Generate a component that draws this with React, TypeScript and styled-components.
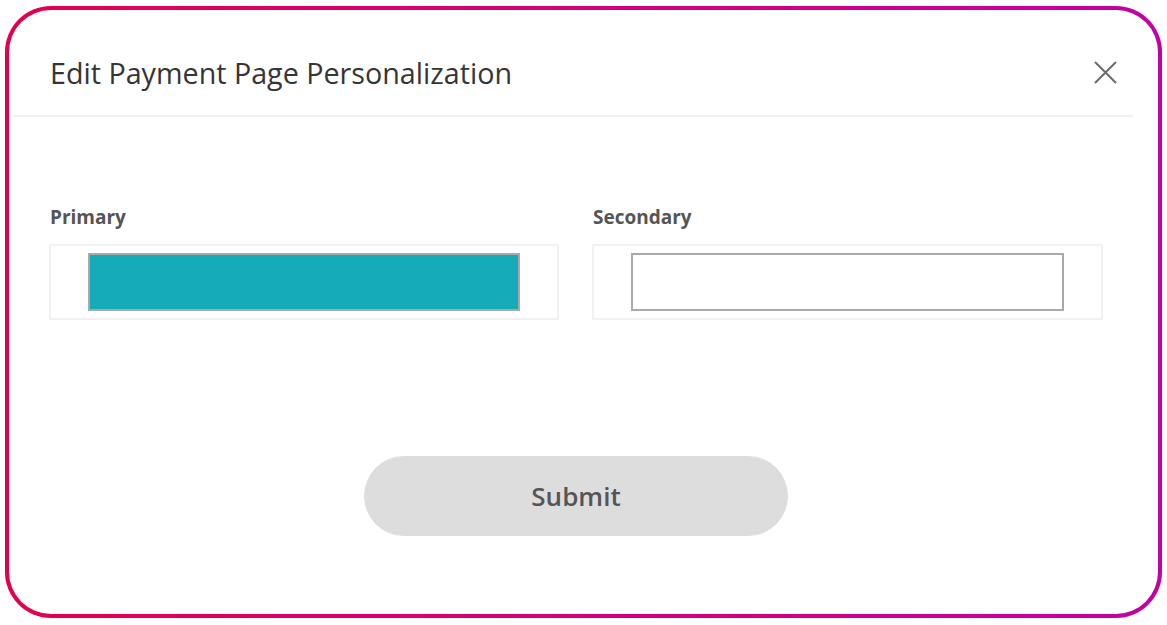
import React from 'react';
import styled, { createGlobalStyle } from 'styled-components';

const GlobalStyle = createGlobalStyle`
  * {
    box-sizing: border-box;
  }
  body {
    margin: 0;
    background: #ffffff;
    font-family: 'Open Sans', 'Noto Sans', sans-serif;
  }
`;

type Swatch = {
  label: string;
  color: string;
};

const swatches: Swatch[] = [
  { label: 'Primary', color: '#15abb9' },
  { label: 'Secondary', color: '#ffffff' },
];

const App: React.FC = () => {
  return (
    <>
      <GlobalStyle />
      <Page>
        <Card>
          <Header>
            <Title>Edit Payment Page Personalization</Title>
            <CloseButton aria-label="Close">
              <svg width="23" height="23" viewBox="0 0 23 23">
                <path d="M1 1 L22 22 M22 1 L1 22" stroke="#6b6b6b" strokeWidth="2" fill="none" />
              </svg>
            </CloseButton>
          </Header>
          <Body>
            <Fields>
              {swatches.map((s) => (
                <Field key={s.label}>
                  <Label>{s.label}</Label>
                  <FieldBox>
                    <ColorBar $color={s.color} />
                  </FieldBox>
                </Field>
              ))}
            </Fields>
            <SubmitButton>Submit</SubmitButton>
          </Body>
        </Card>
      </Page>
    </>
  );
};

const Page = styled.div`
  padding: 6px 5px 7px;
`;

const Card = styled.div`
  width: 1157px;
  height: 612px;
  border: 4px solid transparent;
  border-radius: 46px;
  background:
    linear-gradient(#ffffff, #ffffff) padding-box,
    linear-gradient(90deg, #e3004f 0%, #d2007a 50%, #c200a4 100%) border-box;
  display: flex;
  flex-direction: column;
`;

const Header = styled.div`
  height: 107px;
  margin: 0 25px 0 4px;
  padding: 20px 16px 0 37px;
  display: flex;
  align-items: center;
  justify-content: space-between;
  border-bottom: 2px solid #f0f0f0;
`;

const Title = styled.h1`
  margin: 0;
  font-size: 28.7px;
  font-weight: 400;
  color: #353535;
  line-height: 38px;
`;

const CloseButton = styled.button`
  border: none;
  background: none;
  padding: 0;
  width: 23px;
  height: 23px;
  display: flex;
  cursor: pointer;
`;

const Body = styled.div`
  padding: 87px 55px 0 40px;
  display: flex;
  flex-direction: column;
`;

const Fields = styled.div`
  display: grid;
  grid-template-columns: 510px 511px;
  column-gap: 33px;
`;

const Field = styled.div`
  display: flex;
  flex-direction: column;
  gap: 14px;
`;

const Label = styled.div`
  font-size: 19px;
  font-weight: 700;
  line-height: 26px;
  color: #555555;
  padding-left: 1px;
`;

const FieldBox = styled.div`
  height: 76px;
  border: 2px solid #f1f1f1;
  padding: 7px 37px;
`;

const ColorBar = styled.div<{ $color: string }>`
  height: 100%;
  background: ${({ $color }) => $color};
  border: 2px solid #a9a9a9;
`;

const SubmitButton = styled.button`
  align-self: center;
  margin-top: 136px;
  width: 424px;
  height: 80px;
  border: none;
  border-radius: 40px;
  background: #dddddd;
  font-family: 'Open Sans', 'Noto Sans', sans-serif;
  font-size: 26px;
  font-weight: 600;
  color: #555555;
  cursor: pointer;
`;

export default App;
